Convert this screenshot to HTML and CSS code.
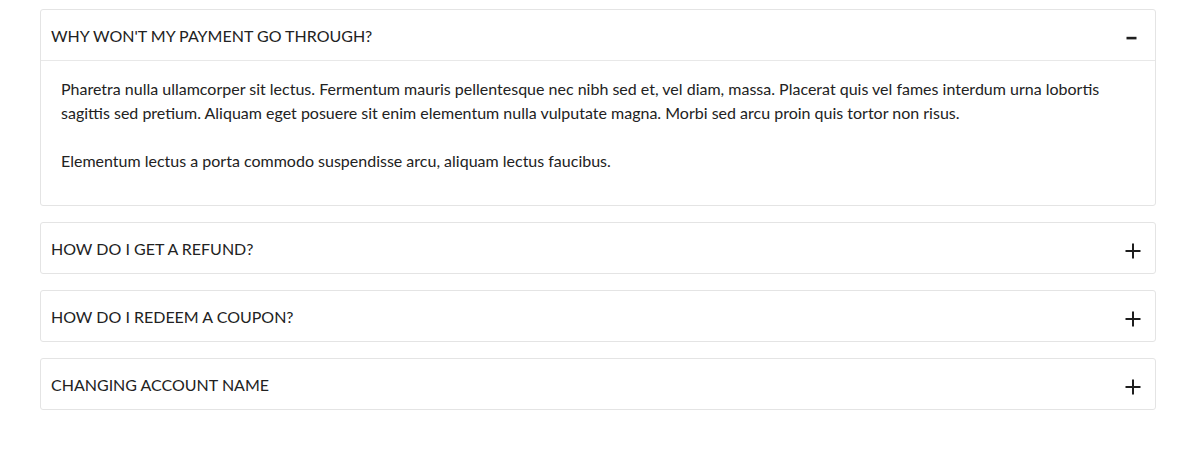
FILE: index.html
```html
<!DOCTYPE html>
<html lang="en">
<head>
<meta charset="utf-8">
<title>FAQ</title>
<link rel="stylesheet" href="styles.css">
</head>
<body>
<div class="faq">
  <div class="item open">
    <div class="head">
      <span class="title">Why won't my payment go through?</span>
      <svg class="icon" viewBox="0 0 16 16" width="16" height="16"><rect x="1.5" y="6.8" width="10" height="2.6" fill="#1e1e1e"/></svg>
    </div>
    <div class="body">
      <p>Pharetra nulla ullamcorper sit lectus. Fermentum mauris pellentesque nec nibh sed et, vel diam, massa. Placerat quis vel fames interdum urna lobortis sagittis sed pretium. Aliquam eget posuere sit enim elementum nulla vulputate magna. Morbi sed arcu proin quis tortor non risus.</p>
      <p>Elementum lectus a porta commodo suspendisse arcu, aliquam lectus faucibus.</p>
    </div>
  </div>
  <div class="item">
    <div class="head">
      <span class="title">How do I get a refund?</span>
      <svg class="icon" viewBox="0 0 16 16" width="16" height="16"><path d="M0.5 8H15.5M8 0.5V15.5" stroke="#1e1e1e" stroke-width="2"/></svg>
    </div>
  </div>
  <div class="item">
    <div class="head">
      <span class="title">How do I redeem a coupon?</span>
      <svg class="icon" viewBox="0 0 16 16" width="16" height="16"><path d="M0.5 8H15.5M8 0.5V15.5" stroke="#1e1e1e" stroke-width="2"/></svg>
    </div>
  </div>
  <div class="item">
    <div class="head">
      <span class="title">Changing account name</span>
      <svg class="icon" viewBox="0 0 16 16" width="16" height="16"><path d="M0.5 8H15.5M8 0.5V15.5" stroke="#1e1e1e" stroke-width="2"/></svg>
    </div>
  </div>
</div>
</body>
</html>
```

FILE: styles.css
```css
html, body {
  margin: 0;
  background: #fff;
}
body {
  font-family: Lato, "Open Sans", sans-serif;
  color: #222;
}
.faq {
  padding: 9px 42px 0 40px;
  display: flex;
  flex-direction: column;
  gap: 16px;
}
.item {
  border: 1px solid #e4e4e4;
  border-radius: 3px;
  background: #fff;
}
.head {
  height: 50px;
  display: flex;
  align-items: center;
  justify-content: space-between;
  padding: 0 14px 0 10px;
}
.item.open .head {
  border-bottom: 1px solid #e8e8e8;
}
.title {
  font-size: 16px;
  text-transform: uppercase;
  color: #222;
}
.icon {
  display: block;
  margin-top: 6px;
  flex: none;
}
.body {
  padding: 16px 20px 8px;
}
.body p {
  margin: 0 0 24px;
  font-size: 16px;
  line-height: 24px;
  color: #222;
}
```
